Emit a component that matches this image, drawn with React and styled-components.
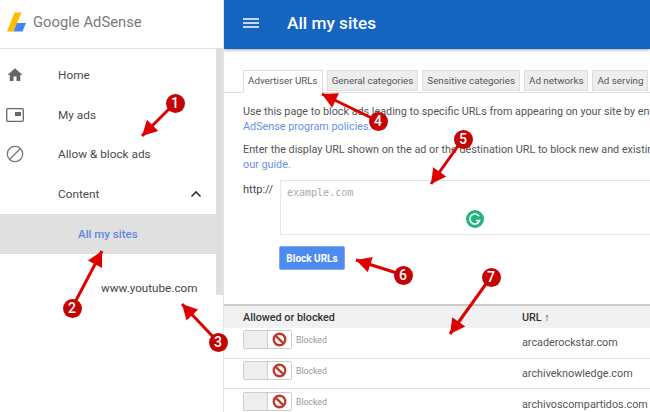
import styled, { createGlobalStyle } from 'styled-components';

const GlobalStyle = createGlobalStyle`
    html, body {
        margin: 0;
        padding: 0;
        background: #fff;
    }
    body {
        font-family: Roboto, "Liberation Sans", sans-serif;
    }
`;

const Page = styled.div`
    width: 650px;
    height: 412px;
    position: relative;
    overflow: hidden;
    display: flex;
    background: #fff;
`;

const Sidebar = styled.aside`
    width: 224px;
    flex: none;
    position: relative;
    box-sizing: border-box;
    border-right: 1px solid #e4e4e4;
`;

const Brand = styled.div`
    height: 49px;
    box-sizing: border-box;
    border-bottom: 1px solid #e3e3e3;
    padding: 0 0 4px 7px;
    display: flex;
    align-items: center;
    gap: 7px;
    color: #7a7a7a;
    font-size: 14.8px;
`;

const Nav = styled.nav`
    width: 216px;
    padding-top: 6px;
`;

const NavItem = styled.div`
    height: 39.7px;
    display: flex;
    align-items: center;
    color: #4a4a4a;
    font-size: 11.8px;
`;

const NavIcon = styled.span`
    width: 58px;
    flex: none;
    display: flex;
    padding-left: 6px;
    box-sizing: border-box;
`;

const NavLabel = styled.span`
    flex: 1;
    padding-left: ${(p) => (p.$plain ? '58px' : '0')};
`;

const ChevronBox = styled.span`
    display: flex;
    margin-right: 14px;
`;

const ActiveItem = styled.div`
    height: 40px;
    display: flex;
    align-items: center;
    padding-left: 78px;
    background: #e0e0e0;
    color: #5f87e0;
    font-size: 11.5px;
    font-weight: 500;
`;

const SubItem = styled.div`
    margin-top: 14px;
    padding-left: 101px;
    height: 40px;
    display: flex;
    align-items: center;
    color: #444;
    font-size: 11.7px;
`;

const Scrollbar = styled.div`
    position: absolute;
    left: 216px;
    top: 48px;
    width: 7px;
    height: 247px;
    background: #e0e0e0;
`;

const Main = styled.main`
    flex: 1;
    min-width: 0;
    overflow: hidden;
`;

const TopBar = styled.header`
    height: 49px;
    box-sizing: border-box;
    padding: 0 0 4px 19px;
    background: #1565c0;
    box-shadow: 0 1px 3px rgba(0, 0, 0, 0.35);
    display: flex;
    align-items: center;
    gap: 28px;
    color: #fff;
    font-size: 17.2px;
    font-weight: 500;
    position: relative;
`;

const Tabs = styled.div`
    display: flex;
    gap: 4px;
    margin-top: 21px;
    padding-left: 19px;
    height: 22px;
    border-bottom: 1px solid #ddd;
`;

const Tab = styled.div`
    flex: none;
    height: ${(p) => (p.$active ? '23px' : '21px')};
    box-sizing: border-box;
    padding: 0 4px;
    border: 1px solid #ddd;
    border-bottom: ${(p) => (p.$active ? '1px solid #fff' : '1px solid #ddd')};
    background: ${(p) => (p.$active ? '#fff' : '#eee')};
    color: #555;
    font-size: 9.8px;
    line-height: 20px;
    white-space: nowrap;
`;

const Copy = styled.div`
    width: 500px;
    padding: 11px 0 0 19px;
    color: #555;
    font-size: 10.8px;
    line-height: 15px;
`;

const Para = styled.p`
    margin: 0 0 8px;
    white-space: nowrap;
`;

const Link = styled.span`
    color: #6b8fe6;
`;

const UrlRow = styled.div`
    display: flex;
    margin-top: 1px;
    padding-left: 19px;
    gap: 5px;
`;

const Protocol = styled.span`
    width: 32px;
    color: #444;
    font-size: 11px;
    padding-top: 3px;
`;

const UrlBox = styled.div`
    flex: 1;
    height: 55px;
    box-sizing: border-box;
    border: 1px solid #e6e6e6;
    border-right: 0;
    padding: 6px;
    position: relative;
    color: #aaa;
    font-family: "DejaVu Sans Mono", "Liberation Mono", monospace;
    font-size: 10px;
`;

const Grammarly = styled.span`
    position: absolute;
    left: 185px;
    top: 29px;
    width: 18px;
    height: 18px;
    display: flex;
`;

const BlockButton = styled.button`
    display: block;
    margin: 11px 0 0 55px;
    width: 66px;
    height: 24px;
    padding: 0;
    border: 1px solid #7fa8ee;
    border-radius: 2px;
    background: #4d8bf0;
    color: #fff;
    font-family: inherit;
    font-size: 10px;
    font-weight: 700;
`;

const Table = styled.div`
    margin-top: 34px;
    border-top: 2px solid #ccc;
`;

const HeadRow = styled.div`
    height: 22px;
    display: flex;
    align-items: center;
    padding-left: 19px;
    background: #f1f1f1;
    color: #333;
    font-size: 10.8px;
    font-weight: 500;
`;

const HeadCell = styled.span`
    width: 279px;
    flex: none;
`;

const Row = styled.div`
    height: 30.7px;
    box-sizing: border-box;
    display: flex;
    align-items: center;
    padding-left: 19px;
    border-bottom: 1px solid #e2e2e2;
`;

const StatusCell = styled.div`
    width: 279px;
    flex: none;
    display: flex;
    align-items: center;
    gap: 4px;
    color: #999;
    font-size: 8.7px;
`;

const Toggle = styled.div`
    width: 49px;
    height: 19px;
    box-sizing: border-box;
    border: 1px solid #ccc;
    border-radius: 2px;
    display: flex;
    margin-top: -6px;
`;

const ToggleHandle = styled.span`
    width: 23px;
    background: #eee;
    border-right: 1px solid #ccc;
`;

const ToggleMark = styled.span`
    flex: 1;
    display: flex;
    align-items: center;
    justify-content: center;
    background: #fff;
`;

const StatusText = styled.span`
    margin-top: -5px;
`;

const UrlCell = styled.div`
    color: #555;
    font-size: 10.8px;
    white-space: nowrap;
`;

const Badge = styled.span`
    position: absolute;
    left: ${(p) => p.$x - 9.5}px;
    top: ${(p) => p.$y - 9.5}px;
    width: 19px;
    height: 19px;
    border-radius: 50%;
    background: #c40404;
    color: #fff;
    font-size: 14px;
    font-weight: 500;
    display: flex;
    align-items: center;
    justify-content: center;
`;

const ArrowLayer = styled.svg`
    position: absolute;
    inset: 0;
    pointer-events: none;
`;

const arrows = [
    { n: 1, x: 175, y: 103, tipX: 142, tipY: 136 },
    { n: 2, x: 72, y: 308, tipX: 102, tipY: 251 },
    { n: 3, x: 218, y: 342, tipX: 182, tipY: 304 },
    { n: 4, x: 378, y: 121, tipX: 322, tipY: 94 },
    { n: 5, x: 463, y: 139, tipX: 431, tipY: 184 },
    { n: 6, x: 403, y: 275, tipX: 356, tipY: 260 },
    { n: 7, x: 491, y: 277, tipX: 450, tipY: 334 },
];

const rows = ['arcaderockstar.com', 'archiveknowledge.com', 'archivoscompartidos.com'];

// arrow head points back from the tip along the shaft
const headPoints = ({ x, y, tipX, tipY }) => {
    const len = Math.hypot(x - tipX, y - tipY);
    const ux = (x - tipX) / len;
    const uy = (y - tipY) / len;
    const bx = tipX + ux * 15;
    const by = tipY + uy * 15;
    return `${tipX},${tipY} ${bx - uy * 8},${by + ux * 8} ${bx + uy * 8},${by - ux * 8}`;
};

const Logo = () => (
    <svg width="19" height="20" viewBox="0 0 19 20">
        <path d="M0 19.5 L7.5 0.5 H14.5 L6.5 19.5 Z" fill="#fbbc04" />
        <path d="M6.5 19.5 L10 11 H19 L15.5 19.5 Z" fill="#4285f4" />
    </svg>
);

const BlockedMark = () => (
    <svg width="15" height="15" viewBox="0 0 14 14">
        <circle cx="7" cy="7" r="5.4" fill="#fff" stroke="#c0392b" strokeWidth="2.2" />
        <path d="M3.2 3.4 L10.8 10.6" stroke="#c0392b" strokeWidth="2.2" />
    </svg>
);

const App = () => {
    return (
        <Page>
            <GlobalStyle />
            <Sidebar>
                <Brand>
                    <Logo />
                    <span>Google AdSense</span>
                </Brand>
                <Nav>
                    <NavItem>
                        <NavIcon>
                            <svg width="18" height="18" viewBox="0 0 24 24">
                                <path d="M10 20v-6h4v6h5v-8h3L12 3 2 12h3v8z" fill="#666" />
                            </svg>
                        </NavIcon>
                        <NavLabel>Home</NavLabel>
                    </NavItem>
                    <NavItem>
                        <NavIcon>
                            <svg width="18" height="14" viewBox="0 0 18 14">
                                <rect x="0.7" y="0.7" width="16.6" height="12.6" rx="1.2" fill="none" stroke="#666" strokeWidth="1.3" />
                                <rect x="9" y="4" width="6" height="4" fill="#666" />
                            </svg>
                        </NavIcon>
                        <NavLabel>My ads</NavLabel>
                    </NavItem>
                    <NavItem>
                        <NavIcon>
                            <svg width="18" height="18" viewBox="0 0 18 18">
                                <circle cx="9" cy="9" r="7.7" fill="none" stroke="#777" strokeWidth="1.3" />
                                <path d="M3.8 14.2 L14.2 3.8" stroke="#777" strokeWidth="1.3" />
                            </svg>
                        </NavIcon>
                        <NavLabel>Allow &amp; block ads</NavLabel>
                    </NavItem>
                    <NavItem>
                        <NavLabel $plain>Content</NavLabel>
                        <ChevronBox>
                            <svg width="12" height="8" viewBox="0 0 12 8">
                                <path d="M1.5 6.5 L6 2 L10.5 6.5" fill="none" stroke="#333" strokeWidth="1.6" />
                            </svg>
                        </ChevronBox>
                    </NavItem>
                    <ActiveItem>All my sites</ActiveItem>
                    <SubItem>www.youtube.com</SubItem>
                </Nav>
                <Scrollbar />
            </Sidebar>
            <Main>
                <TopBar>
                    <svg width="16" height="10" viewBox="0 0 16 10">
                        <path d="M0 1h16M0 5h16M0 9h16" stroke="#fff" strokeWidth="1.6" />
                    </svg>
                    <span>All my sites</span>
                </TopBar>
                <Tabs>
                    <Tab $active>Advertiser URLs</Tab>
                    <Tab>General categories</Tab>
                    <Tab>Sensitive categories</Tab>
                    <Tab>Ad networks</Tab>
                    <Tab>Ad serving</Tab>
                </Tabs>
                <Copy>
                    <Para>
                        Use this page to block ads leading to specific URLs from appearing on your site by entering
                        <br />
                        <Link>AdSense program policies.</Link>
                    </Para>
                    <Para>
                        Enter the display URL shown on the ad or the destination URL to block new and existing
                        <br />
                        <Link>our guide.</Link>
                    </Para>
                </Copy>
                <UrlRow>
                    <Protocol>http://</Protocol>
                    <UrlBox>
                        example.com
                        <Grammarly>
                            <svg width="18" height="18" viewBox="0 0 18 18">
                                <circle cx="9" cy="9" r="9" fill="#26b47d" />
                                <path d="M13 6.2 A5 5 0 1 0 13.6 10.5 H10" fill="none" stroke="#fff" strokeWidth="1.6" />
                            </svg>
                        </Grammarly>
                    </UrlBox>
                </UrlRow>
                <BlockButton>Block URLs</BlockButton>
                <Table>
                    <HeadRow>
                        <HeadCell>Allowed or blocked</HeadCell>
                        <span>URL ↑</span>
                    </HeadRow>
                    {rows.map((url) => (
                        <Row key={url}>
                            <StatusCell>
                                <Toggle>
                                    <ToggleHandle />
                                    <ToggleMark>
                                        <BlockedMark />
                                    </ToggleMark>
                                </Toggle>
                                <StatusText>Blocked</StatusText>
                            </StatusCell>
                            <UrlCell>{url}</UrlCell>
                        </Row>
                    ))}
                </Table>
            </Main>
            <ArrowLayer width="650" height="412">
                {arrows.map((a) => (
                    <g key={a.n}>
                        <line x1={a.x} y1={a.y} x2={a.tipX} y2={a.tipY} stroke="#d00" strokeWidth="3" />
                        <polygon points={headPoints(a)} fill="#d00" />
                    </g>
                ))}
            </ArrowLayer>
            {arrows.map((a) => (
                <Badge key={a.n} $x={a.x} $y={a.y}>{a.n}</Badge>
            ))}
        </Page>
    );
};

export default App;
